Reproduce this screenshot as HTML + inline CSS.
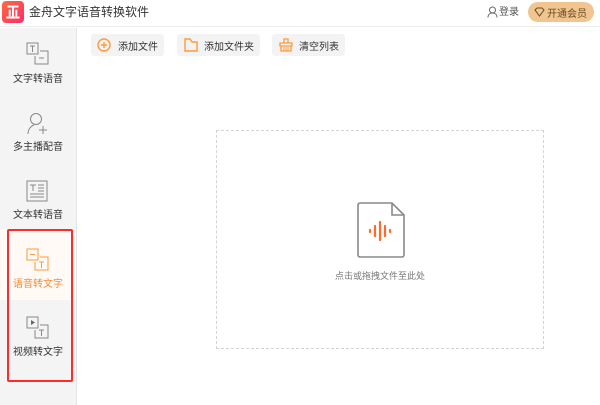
<!DOCTYPE html>
<html><head><meta charset="utf-8"><style>
*{margin:0;padding:0;box-sizing:border-box}
body{width:600px;height:405px;overflow:hidden;background:#fff;font-family:"Liberation Sans","Noto Sans CJK SC",sans-serif;position:relative;color:#333}
.top{position:absolute;left:0;top:0;width:600px;height:27px;border-bottom:1px solid #ececec;background:#fff}
.logo{position:absolute;left:2px;top:1px;width:22px;height:22px;border-radius:4px;background:linear-gradient(135deg,#ff6a3d,#ff2d6a)}
.title{position:absolute;left:29px;top:5px;font-size:12px;color:#333;line-height:14px}
.login{position:absolute;left:499px;top:6px;font-size:10px;color:#555;line-height:13px}
.vip{position:absolute;left:528px;top:2px;width:66px;height:20px;border-radius:10px;background:#f0c590;font-size:10px;color:#6a4a20;display:flex;align-items:center;padding-left:19px}
.side{position:absolute;left:0;top:28px;width:77px;height:377px;background:#f4f4f5;border-right:1px solid #e4e4e4}
.it{position:absolute;left:0;width:76px;text-align:center;font-size:10px;color:#333;line-height:13px}
.act{background:#fffaf5;color:#ff8a2a}
.red{position:absolute;left:7px;top:229px;width:66px;height:153px;border:2px solid #ff2a2a;border-radius:2px}
.btn{position:absolute;top:34px;height:22px;background:#f3f3f3;border-radius:3px;font-size:10px;color:#333;display:flex;align-items:center}
.drop{position:absolute;left:216px;top:130px;width:328px;height:219px;border:1px dashed #d4d4d4}
.hint{position:absolute;left:0;width:100%;top:138px;text-align:center;font-size:9px;color:#777}
svg{position:absolute}
</style></head><body>
<div class="top">
<div class="logo"><svg width="22" height="22" viewBox="0 0 20 20"><path d="M5 5h10M10 5v11M7 8v6M13 8v6M4 15h12" stroke="#fff" stroke-width="1.8" fill="none"/></svg></div>
<div class="title">金舟文字语音转换软件</div>
<svg style="left:487px;top:6px" width="11" height="12" viewBox="0 0 11 12"><circle cx="5.5" cy="4" r="3" stroke="#666" fill="none"/><path d="M1 11.5c0-3 2-4.5 4.5-4.5s4.5 1.5 4.5 4.5" stroke="#666" fill="none"/></svg>
<div class="login">登录</div>
<div class="vip"><svg style="left:6px;top:5px" width="11" height="10" viewBox="0 0 11 10"><path d="M1 3l2-2h5l2 2-4.5 6z" stroke="#6a4a20" fill="none"/></svg>开通会员</div>
</div>
<div class="side">
<svg style="left:26px;top:14px" width="24" height="24" viewBox="0 0 24 24"><rect x="1" y="1" width="11" height="11" stroke="#888" fill="none"/><path d="M4 4h5M6.5 4v6" stroke="#888"/><path d="M14 9h8v13H9v-8" stroke="#888" fill="none"/><path d="M13 16h5" stroke="#888"/></svg>
<div class="it" style="top:45px">文字转语音</div>
<svg style="left:26px;top:84px" width="24" height="24" viewBox="0 0 24 24"><circle cx="10" cy="7" r="5.5" stroke="#888" fill="none"/><path d="M2 22c0-5 3-8 6-9" stroke="#888" fill="none"/><path d="M17 14v8M13 18h8" stroke="#888"/></svg>
<div class="it" style="top:113px">多主播配音</div>
<svg style="left:26px;top:152px" width="22" height="22" viewBox="0 0 22 22"><rect x="1" y="1" width="20" height="20" stroke="#888" fill="none"/><path d="M4 5h6M7 5v6M12 5h6M12 8h6M12 11h6M4 14h14M4 17h14" stroke="#888"/></svg>
<div class="it" style="top:181px">文本转语音</div>
<div class="it act" style="top:201px;height:71px"></div>
<svg style="left:26px;top:220px" width="24" height="24" viewBox="0 0 24 24"><rect x="1" y="1" width="11" height="11" stroke="#ff9a3a" fill="none"/><path d="M4 6.5h5" stroke="#ff9a3a"/><path d="M14 9h8v13H9v-8" stroke="#ff9a3a" fill="none"/><path d="M13 14h5M15.5 14v6" stroke="#ff9a3a"/></svg>
<div class="it" style="top:250px;color:#ff8a2a">语音转文字</div>
<svg style="left:26px;top:288px" width="24" height="24" viewBox="0 0 24 24"><rect x="1" y="1" width="11" height="11" stroke="#888" fill="none"/><path d="M5 4l4 2.5-4 2.5z" fill="#666"/><path d="M14 9h8v13H9v-8" stroke="#888" fill="none"/><path d="M13 14h5M15.5 14v6" stroke="#888"/></svg>
<div class="it" style="top:318px">视频转文字</div>
</div>
<div class="red"></div>
<div class="btn" style="left:91px;width:73px;padding-left:27px"><svg style="left:6px;top:4px" width="14" height="14" viewBox="0 0 14 14"><circle cx="7" cy="7" r="6" stroke="#ff9a3a" stroke-width="1.4" fill="none"/><path d="M7 4v6M4 7h6" stroke="#ff9a3a" stroke-width="1.4"/></svg>添加文件</div>
<div class="btn" style="left:177px;width:83px;padding-left:27px"><svg style="left:7px;top:4px" width="14" height="14" viewBox="0 0 14 14"><path d="M1 1h5l2 3h5v9H1z" stroke="#ff9a3a" stroke-width="1.4" fill="none"/></svg>添加文件夹</div>
<div class="btn" style="left:272px;width:73px;padding-left:27px"><svg style="left:7px;top:4px" width="14" height="14" viewBox="0 0 14 14"><path d="M5 1h4v4H5zM1 5h12v3H1zM2 8h10v5H2z" stroke="#ff9a3a" stroke-width="1.3" fill="none"/><path d="M5 9v4M7 9v4M9 9v4" stroke="#ff9a3a"/></svg>清空列表</div>
<div class="drop">
<svg style="left:139px;top:71px" width="50" height="56" viewBox="0 0 50 56"><path d="M4 1h32l12 12v40a2 2 0 0 1-2 2H4a2 2 0 0 1-2-2V3a2 2 0 0 1 2-2z" stroke="#888" stroke-width="1.6" fill="none"/><path d="M36 1v12h12" stroke="#888" stroke-width="1.6" fill="none"/><path d="M14 28v2M19 24v10M24 20v18M29 24v10M34 28v2" stroke="#ff6a2a" stroke-width="2.2" stroke-linecap="round"/></svg>
<div class="hint">点击或拖拽文件至此处</div>
</div>
</body></html>
